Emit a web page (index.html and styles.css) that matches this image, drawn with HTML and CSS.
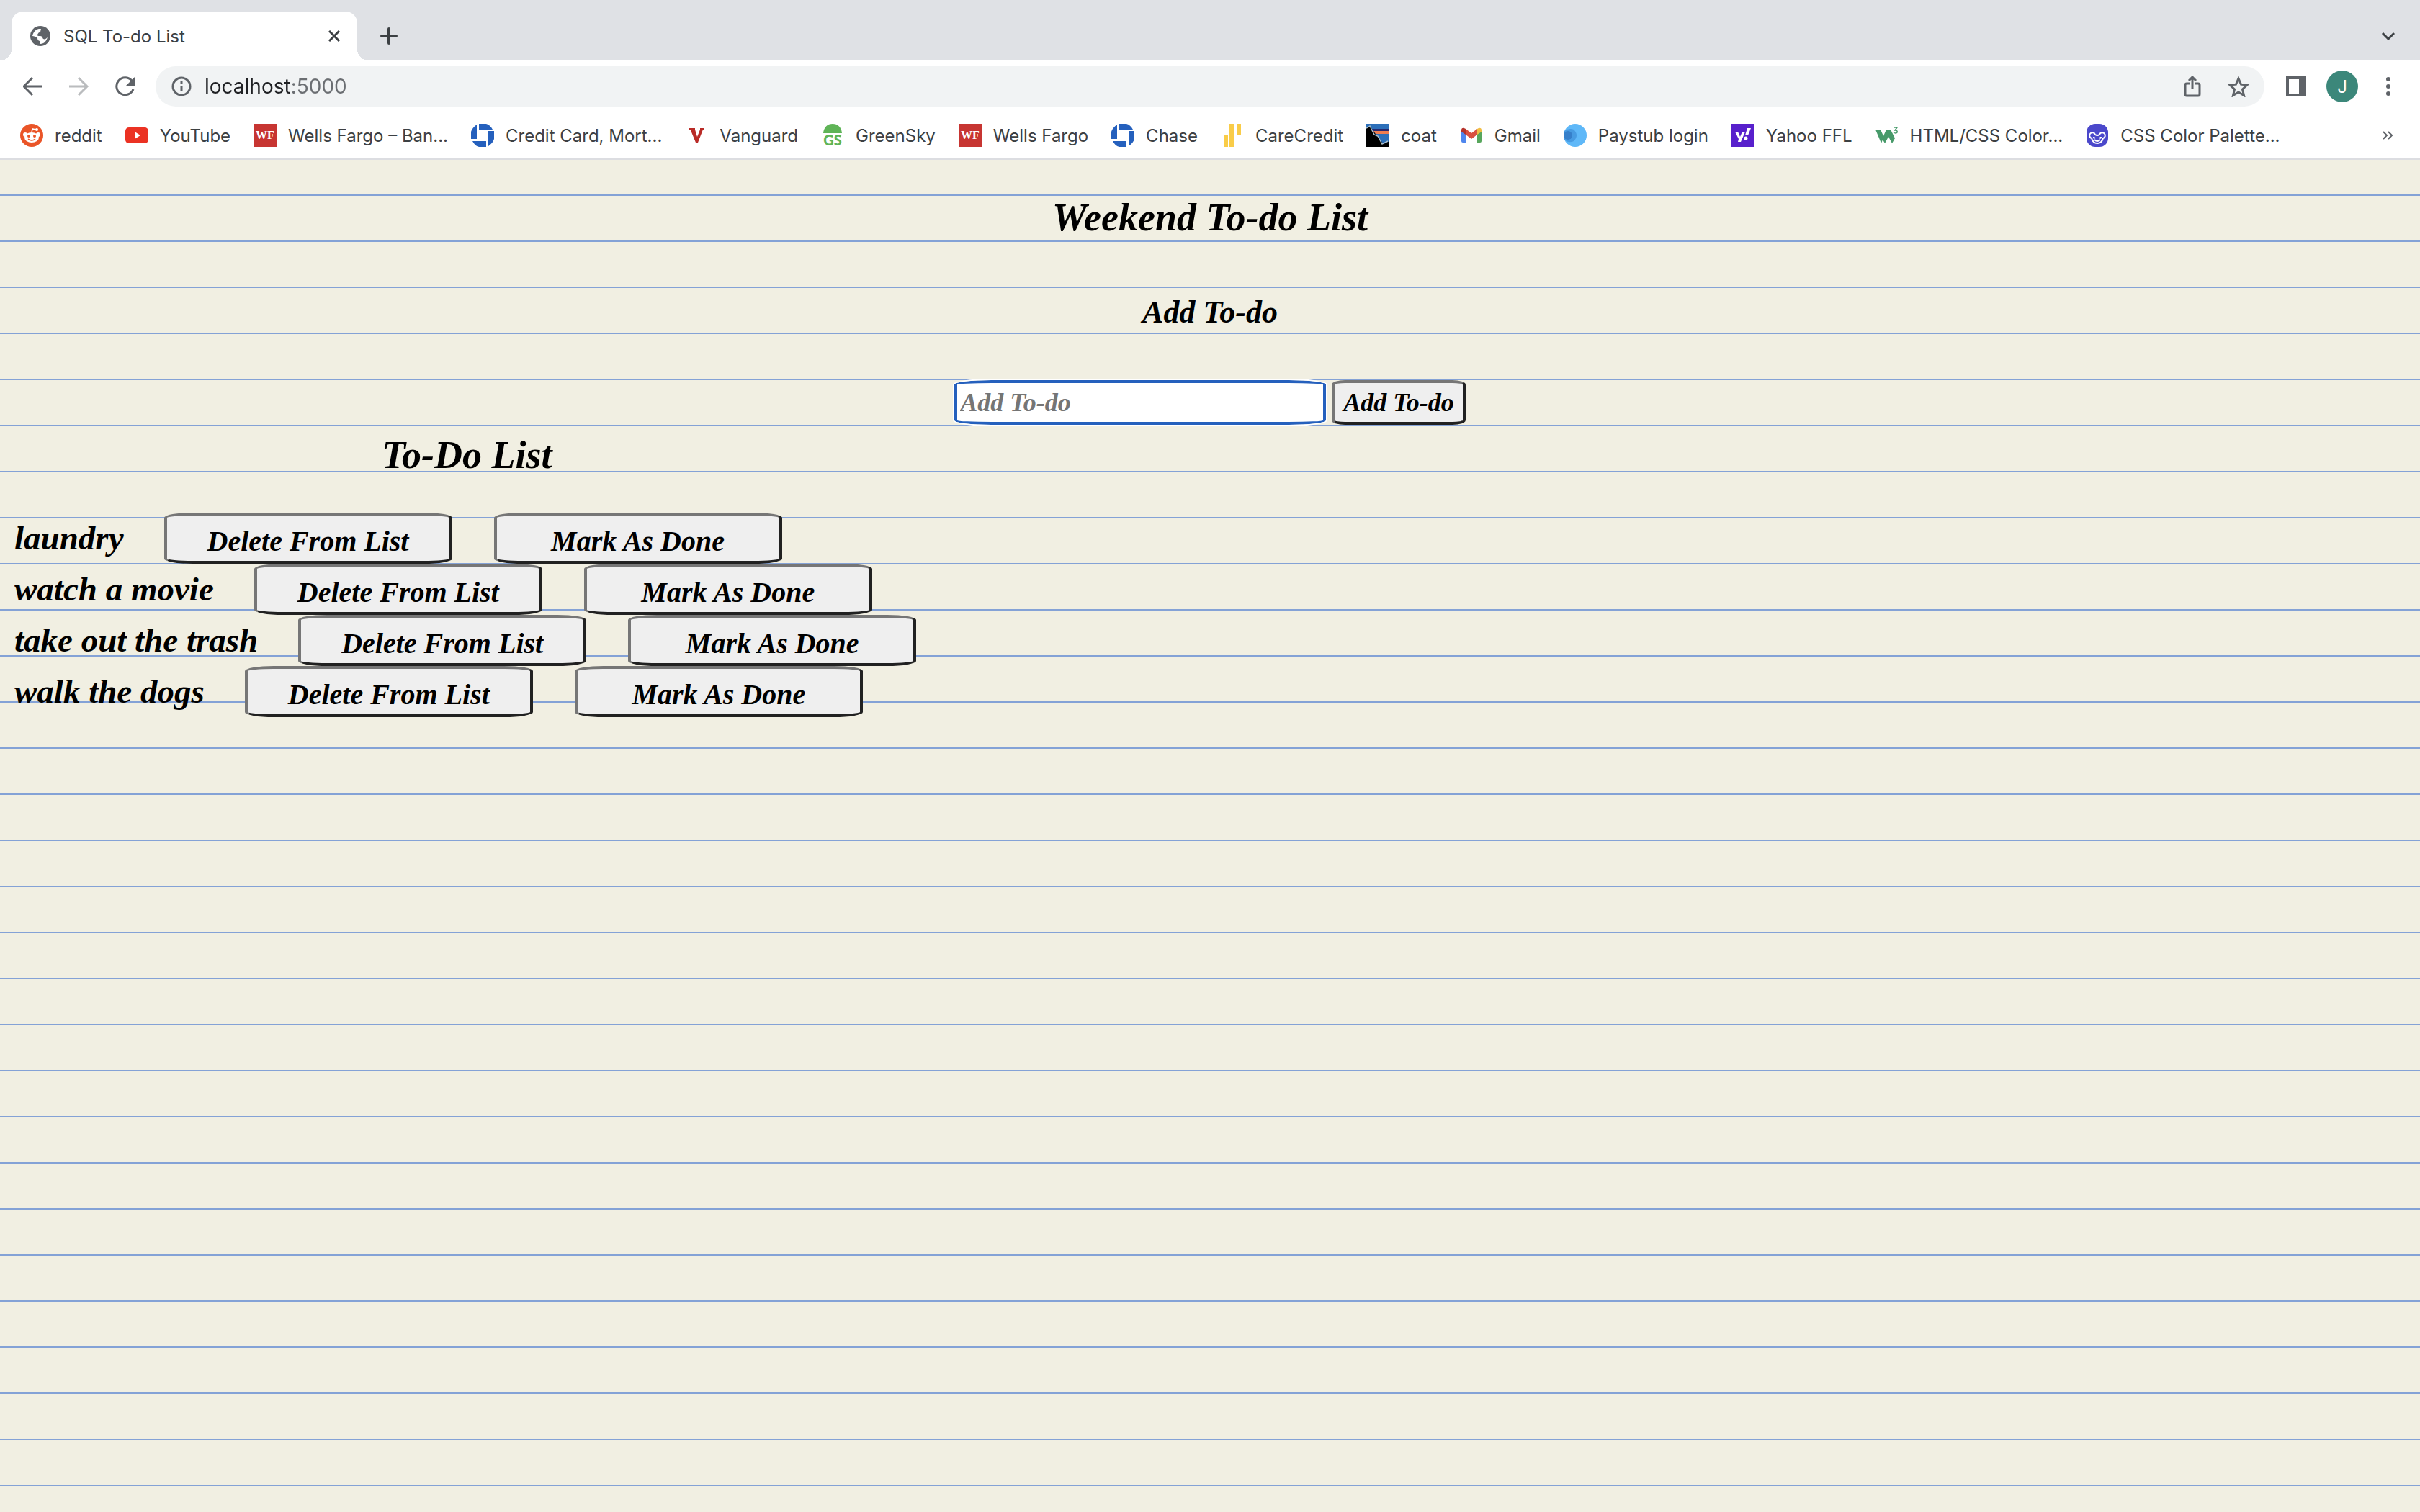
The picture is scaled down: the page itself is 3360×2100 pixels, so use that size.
FILE: index.html
```html
<!DOCTYPE html>
<html lang="en">
<head>
<meta charset="utf-8">
<title>SQL To-do List</title>
<link rel="stylesheet" href="styles.css">
</head>
<body>
<svg class="defs" aria-hidden="true">
  <symbol id="wf" viewBox="0 0 32 32"><path fill="#c73532" d="M0 0h32v32H0z"/><text x="16" y="21" text-anchor="middle" font-family="Liberation Serif, serif" font-weight="700" font-size="16" fill="#fff">WF</text></symbol>
  <symbol id="chase" viewBox="0 0 32 32"><path fill="#2560bd" d="M11 0h10c4 1 7 4 9 8H11zM24 10h8v11c-1 4-4 7-8 10zM21 32H11c-4-1-7-4-9-8h19zM8 21H0V11c1-4 4-7 8-10z"/></symbol>
</svg>
<header class="browser">
  <div class="tabs">
    <div class="tab">
      <svg width="28" height="28" viewBox="0 0 28 28"><circle cx="14" cy="14" r="14" fill="#5f6368"/><path fill="#fff" d="M3 14c1-5 4-9 9-10l3 0c-1 2 0 4-2 5-2 0-2 2-3 3-1 2 2 2 4 2 3 0 3 3 4 4 2 1 5 0 6-3-1 6-5 10-10 10v-4c-3 0-4-2-4-4-2-2-5-3-7-3z"/></svg>
      <span class="tab-title">SQL To-do List</span>
      <button class="icon" aria-label="Close tab"><svg width="16" height="16" viewBox="0 0 16 16"><path d="M1 1l14 14M15 1L1 15" stroke="#3c4043" stroke-width="3"/></svg></button>
    </div>
    <button class="icon new-tab" aria-label="New tab"><svg width="24" height="24" viewBox="0 0 24 24"><path d="M12 2v20M2 12h20" stroke="#3c4043" stroke-width="4" stroke-linecap="round"/></svg></button>
    <button class="icon tab-search" aria-label="Search tabs"><svg width="20" height="12" viewBox="0 0 20 12"><path d="M2 2l8 8 8-8" fill="none" stroke="#3c4043" stroke-width="3"/></svg></button>
  </div>
  <div class="toolbar">
    <nav class="history">
      <button class="icon" aria-label="Back"><svg width="28" height="28" viewBox="0 0 28 28"><path d="M26 14H2M13 2L1 14l12 12" fill="none" stroke="#5f6368" stroke-width="3"/></svg></button>
      <button class="icon" aria-label="Forward"><svg width="28" height="28" viewBox="0 0 28 28"><path d="M0 14h24M13 2l12 12-12 12" fill="none" stroke="#babcbe" stroke-width="3"/></svg></button>
      <button class="icon" aria-label="Reload"><svg width="28" height="28" viewBox="0 0 28 28"><path d="M23 6A12 12 0 1 0 25 18" fill="none" stroke="#5f6368" stroke-width="3"/><path d="M27 1v12H15z" fill="#5f6368"/></svg></button>
    </nav>
    <div class="omnibox">
      <svg width="28" height="28" viewBox="0 0 28 28"><circle cx="14" cy="14" r="12" fill="none" stroke="#5f6368" stroke-width="3"/><path d="M14 7v4M14 13v8" stroke="#5f6368" stroke-width="3"/></svg>
      <input class="address" aria-label="Address" value="localhost:5000">
      <button class="icon" aria-label="Share"><svg width="24" height="30" viewBox="0 0 24 30"><path d="M8 11H4q-2 0-2 2v13q0 2 2 2h16q2 0 2-2V13q0-2-2-2h-4M12 19V3M7 7l5-5 5 5" fill="none" stroke="#5f6368" stroke-width="3"/></svg></button>
      <button class="icon" aria-label="Bookmark this page"><svg width="32" height="30" viewBox="0 0 32 30"><path d="M16 4l3.500 8.200 8.500.8-6.500 6 2 8.500L16 23l-7.500 4.500 2-8.500L4 13l8.500-.8z" fill="none" stroke="#5f6368" stroke-width="3"/></svg></button>
    </div>
    <button class="icon" aria-label="Side panel"><svg width="28" height="28" viewBox="0 0 28 28"><path fill="#5f6368" d="M0 0h28v28H0z"/><path fill="#fff" d="M4 4h14v20H4z"/></svg></button>
    <button class="avatar" aria-label="Profile">J</button>
    <button class="icon menu" aria-label="Menu"><svg width="8" height="28" viewBox="0 0 8 28" fill="#5f6368"><circle cx="4" cy="4" r="3"/><circle cx="4" cy="14" r="3"/><circle cx="4" cy="24" r="3"/></svg></button>
  </div>
  <nav class="bookmarks">
    <a href="#"><svg viewBox="0 0 32 32"><circle cx="16" cy="16" r="16" fill="#ea5528"/><circle cx="7" cy="15" r="3" fill="#fff"/><circle cx="25" cy="15" r="3" fill="#fff"/><ellipse cx="16" cy="19" rx="10" ry="7" fill="#fff"/><path d="M16 12l1-5 5 1" stroke="#fff" stroke-width="1.500" fill="none"/><circle cx="23" cy="8" r="2" fill="#fff"/><circle cx="12" cy="17" r="2" fill="#ea5528"/><circle cx="20" cy="17" r="2" fill="#ea5528"/><path d="M11 21q5 4 10 0" stroke="#ea5528" stroke-width="1.500" fill="none"/></svg>reddit</a>
    <a href="#"><svg viewBox="0 0 32 32"><rect y="5" width="32" height="22" rx="5" fill="#eb3223"/><path d="M13 11l8 5-8 5z" fill="#fff"/></svg>YouTube</a>
    <a href="#"><svg><use href="#wf"/></svg>Wells Fargo – Ban...</a>
    <a href="#"><svg><use href="#chase"/></svg>Credit Card, Mort...</a>
    <a href="#"><svg viewBox="0 0 32 32"><path fill="#b92b27" d="M6 6h8v2l3 10 4-10V6h5v2h-1l-7 18h-3L8 9H6z"/></svg>Vanguard</a>
    <a href="#"><svg viewBox="0 0 32 32"><path fill="#5fb457" d="M3 13C4 4 9 0 16 0s12 4 13 13z"/><text x="16" y="30" text-anchor="middle" font-family="Lato, sans-serif" font-weight="900" font-size="20" fill="#5fb457">GS</text></svg>GreenSky</a>
    <a href="#"><svg><use href="#wf"/></svg>Wells Fargo</a>
    <a href="#"><svg><use href="#chase"/></svg>Chase</a>
    <a href="#"><svg viewBox="0 0 32 32"><path fill="#f9cc48" d="M4 16h6v16H4zM12 0h7v32h-7zM22 0h6v16h-6z"/></svg>CareCredit</a>
    <a href="#"><svg viewBox="0 0 32 32"><path fill="#000" d="M0 0h32v32H0z"/><path fill="#2c6fb9" d="M0 0h32v24l-8 4-8-10-6-8-4-6-6 2z"/><path fill="#26286e" d="M8 7h24v3H10z"/><path fill="#ef7d50" d="M10 10h22v4H13z"/><path d="M0 6l5-3 6 12 5 2 6 11 8-4" fill="none" stroke="#a9bdc9" stroke-width="1.500"/></svg>coat</a>
    <a href="#"><svg viewBox="0 0 32 32"><path fill="#4e86ee" d="M2 9l6 4v13H4q-2 0-2-2z"/><path fill="#57a65c" d="M24 13l6-4v15q0 2-2 2h-4z"/><path fill="#d9503f" d="M8 7l8 6 8-6v8l-8 6-8-6z"/><path fill="#b5322a" d="M2 11V8q1-4 6-1v8z"/><path fill="#f1bd42" d="M30 11V8q-1-4-6-1v8z"/></svg>Gmail</a>
    <a href="#"><svg viewBox="0 0 32 32"><circle cx="16" cy="16" r="16" fill="#5fb8f8"/><path fill="#479be2" d="M1 10q7-5 13-2 8 8 0 16-6 3-12-1-4-6-1-13z"/><circle cx="6" cy="16" r="6" fill="#367fca"/></svg>Paystub login</a>
    <a href="#"><svg viewBox="0 0 32 32"><path fill="#5820cc" d="M0 0h32v32H0z"/><path fill="#fff" d="M5 11h4l3 7 3-7h4l-6 14H9l1-4zM22 6h5l-4 10h-4z"/><circle cx="20" cy="20" r="2.500" fill="#fff"/></svg>Yahoo FFL</a>
    <a href="#"><svg viewBox="0 0 32 32"><path fill="#479a6a" d="M0 8h7l4 9 4-9h6l6 12-4 7-5-9-5 9-3-5-2 5z"/><path d="M25 5h5l-3 4q4 0 3 3-2 2-5 0" fill="none" stroke="#479a6a" stroke-width="1.500"/></svg>HTML/CSS Color...</a>
    <a href="#"><svg viewBox="0 0 32 32"><rect x="1" width="30" height="32" rx="12" fill="#4b48cb"/><path d="M8 20a4 4 0 1 1 5-5q3 2 6 0a4 4 0 1 1 5 5q-2 7-8 7t-8-7zM11 18q0 3 2 1M21 18q0 3-2 1M12 22q4 4 8 0" fill="none" stroke="#fff" stroke-width="2"/></svg>CSS Color Palette...</a>
    <button class="icon more" aria-label="More bookmarks"><svg width="14" height="14" viewBox="0 0 14 14"><path d="M1 2l5 5-5 5M8 2l5 5-5 5" fill="none" stroke="#5f6368" stroke-width="2"/></svg></button>
  </nav>
</header>
<main class="paper">
  <h1>Weekend To-do List</h1>
  <h2>Add To-do</h2>
  <form class="add">
    <input class="task" aria-label="Add To-do" placeholder="Add To-do">
    <button type="button" class="key">Add To-do</button>
  </form>
  <section class="todo">
    <h1>To-Do List</h1>
    <ul>
      <li><span>laundry</span><button class="key">Delete From List</button><button class="key">Mark As Done</button></li>
      <li><span>watch a movie</span><button class="key">Delete From List</button><button class="key">Mark As Done</button></li>
      <li><span>take out the trash</span><button class="key">Delete From List</button><button class="key">Mark As Done</button></li>
      <li><span>walk the dogs</span><button class="key">Delete From List</button><button class="key">Mark As Done</button></li>
    </ul>
  </section>
</main>
</body>
</html>
```
FILE: styles.css
```css
* { box-sizing: border-box; }
body {
  margin: 0;
  min-height: 100vh;
  display: flex;
  flex-direction: column;
  font-family: Inter, sans-serif;
  font-size: 24px;
  color: #3c4043;
}
.defs { display: none; }
svg { display: block; flex: none; }
button, input { font: inherit; color: inherit; }
.icon { display: block; padding: 0; border: 0; background: none; flex: none; }

/* Browser chrome */
.browser { background: #fff; border-bottom: 2px solid #dcdde1; }
.tabs {
  display: flex;
  align-items: center;
  height: 84px;
  padding: 16px 34px 0 16px;
  background: #dfe1e5;
}
.tab {
  position: relative;
  display: flex;
  align-items: center;
  gap: 18px;
  width: 480px;
  height: 68px;
  padding: 0 24px 0 26px;
  background: #fff;
  border-radius: 16px 16px 0 0;
}
.tab::before, .tab::after {
  content: "";
  position: absolute;
  bottom: 0;
  width: 16px;
  height: 16px;
}
.tab::before { left: -16px; background: radial-gradient(circle at 0 0, #dfe1e5 16px, #fff 16px); }
.tab::after { right: -16px; background: radial-gradient(circle at 100% 0, #dfe1e5 16px, #fff 16px); }
.tab-title { flex: 1; }
.new-tab { margin-left: 32px; }
.tab-search { margin-left: auto; }
.toolbar {
  display: flex;
  align-items: center;
  gap: 28px;
  height: 72px;
  padding: 0 40px 0 32px;
}
.toolbar > .icon { margin-left: 2px; }
.toolbar > .menu { margin-left: 10px; }
.history { display: flex; gap: 36px; }
.omnibox {
  flex: 1;
  display: flex;
  align-items: center;
  gap: 36px;
  height: 56px;
  padding: 0 20px 0 22px;
  border-radius: 28px;
  background: #f1f3f4;
}
.address {
  flex: 1;
  margin-left: -18px;
  padding: 0;
  border: 0;
  font-size: 28px;
  color: transparent;
  background: linear-gradient(90deg, #202124 120px, #6b6e72 120px) text;
}
.avatar {
  width: 44px;
  height: 44px;
  padding: 0;
  border: 0;
  border-radius: 50%;
  background: #3c877a;
  color: #fff;
}
.bookmarks {
  display: flex;
  align-items: center;
  gap: 32px;
  height: 64px;
  padding: 0 38px 0 28px;
}
.bookmarks a {
  display: flex;
  align-items: center;
  gap: 16px;
  color: inherit;
  text-decoration: none;
  white-space: nowrap;
}
.bookmarks a svg { width: 32px; height: 32px; }
.more { margin-left: auto; }

/* Ruled paper */
.paper {
  flex: 1;
  padding: 24px 16px;
  background: repeating-linear-gradient(#f1efe2 0 62px, #84a2d6 62px 64px) 0 -14px / 100% calc(100% + 14px);
  color: #000;
  font-family: "Brush Script MT", "Liberation Serif", serif;
  font-weight: 700;
  font-style: italic;
}
h1, h2 { margin: 0; text-align: center; }
h1 { font-size: 54px; line-height: 112px; }
h2 { font-size: 44px; line-height: 152px; }
.add { display: flex; justify-content: center; gap: 8px; padding: 18px 0 0; }
.key {
  height: 71px;
  padding: 0 12px;
  border: 4px solid;
  border-color: #767676 #212121 #212121 #767676;
  border-radius: 10%;
  background: #efefef;
  color: #000;
  font-size: 40px;
  white-space: nowrap;
}
.add .key, .task { height: 62px; font-size: 36px; }
.task {
  width: 516px;
  padding: 0 4px;
  border: 4px solid #2560bd;
  border-radius: 10%;
  outline: 2px solid #fff;
  background: #fff;
}
.task::placeholder { color: #757575; opacity: 1; }
.todo { width: 38%; }
.todo h1 { line-height: 84px; }
.todo ul { margin: 38px 0 0; padding: 0 4px; list-style: none; }
.todo li { display: flex; align-items: center; font-size: 47px; line-height: 71px; white-space: nowrap; }
.todo span { margin-right: 56px; }
.todo .key { width: 400px; flex: none; }
.todo .key + .key { margin-left: 58px; }
```
